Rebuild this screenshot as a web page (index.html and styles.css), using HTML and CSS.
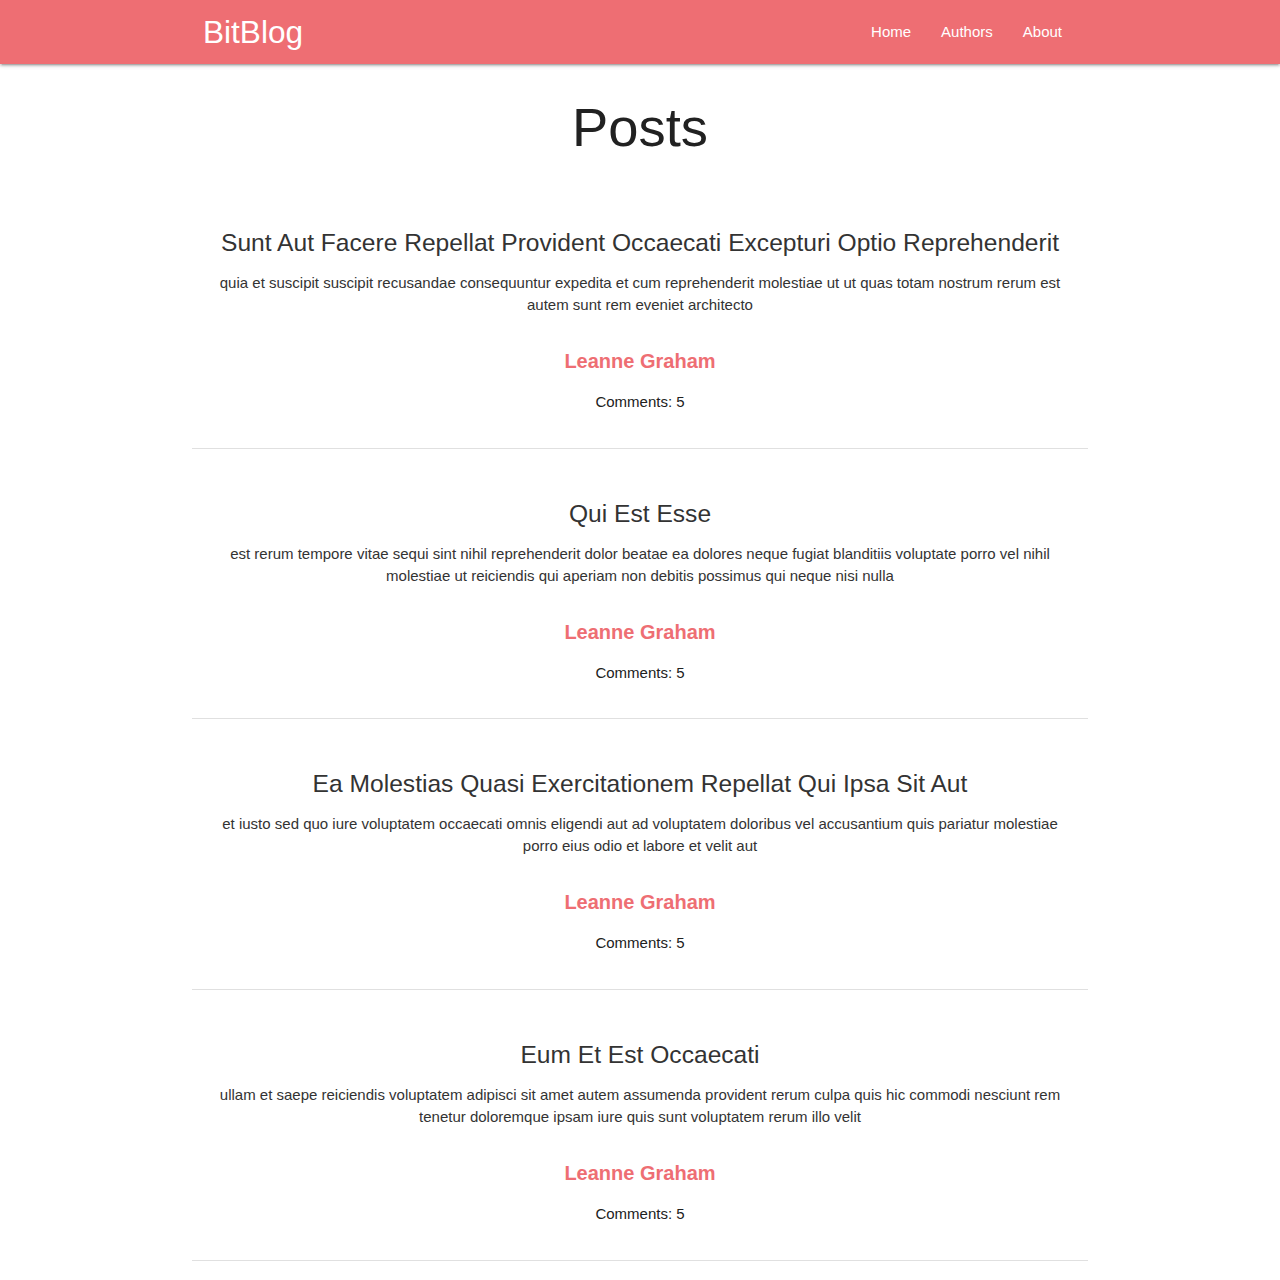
FILE: index.html
```html
<!DOCTYPE html>
<html lang="en">
<head>
<meta charset="utf-8">
<title>BitBlog</title>
<link rel="stylesheet" href="styles.css">
</head>
<body>
<nav class="nav">
  <div class="nav-wrapper">
    <a class="brand" href="#">BitBlog</a>
    <ul class="nav-links">
      <li><a href="#">Home</a></li>
      <li><a href="#">Authors</a></li>
      <li><a href="#">About</a></li>
    </ul>
  </div>
</nav>
<main class="container">
  <h1 class="page-title">Posts</h1>
  <article class="post">
    <h2 class="post-title">Sunt Aut Facere Repellat Provident Occaecati Excepturi Optio Reprehenderit</h2>
    <p class="post-body">quia et suscipit suscipit recusandae consequuntur expedita et cum reprehenderit molestiae ut ut quas totam nostrum rerum est autem sunt rem eveniet architecto</p>
    <a class="post-author" href="#">Leanne Graham</a>
    <p class="post-comments">Comments: 5</p>
  </article>
  <article class="post">
    <h2 class="post-title">Qui Est Esse</h2>
    <p class="post-body">est rerum tempore vitae sequi sint nihil reprehenderit dolor beatae ea dolores neque fugiat blanditiis voluptate porro vel nihil molestiae ut reiciendis qui aperiam non debitis possimus qui neque nisi nulla</p>
    <a class="post-author" href="#">Leanne Graham</a>
    <p class="post-comments">Comments: 5</p>
  </article>
  <article class="post">
    <h2 class="post-title">Ea Molestias Quasi Exercitationem Repellat Qui Ipsa Sit Aut</h2>
    <p class="post-body">et iusto sed quo iure voluptatem occaecati omnis eligendi aut ad voluptatem doloribus vel accusantium quis pariatur molestiae porro eius odio et labore et velit aut</p>
    <a class="post-author" href="#">Leanne Graham</a>
    <p class="post-comments">Comments: 5</p>
  </article>
  <article class="post">
    <h2 class="post-title">Eum Et Est Occaecati</h2>
    <p class="post-body">ullam et saepe reiciendis voluptatem adipisci sit amet autem assumenda provident rerum culpa quis hic commodi nesciunt rem tenetur doloremque ipsam iure quis sunt voluptatem rerum illo velit</p>
    <a class="post-author" href="#">Leanne Graham</a>
    <p class="post-comments">Comments: 5</p>
  </article>
</main>
</body>
</html>
```

FILE: styles.css
```css
* { box-sizing: border-box; }
body {
  margin: 0;
  font-family: "Liberation Sans", Arial, sans-serif;
  color: rgba(0,0,0,0.87);
  background: #fff;
}
a { text-decoration: none; }
.nav {
  height: 64px;
  background: #ee6e73;
  box-shadow: 0 2px 2px 0 rgba(0,0,0,0.14), 0 3px 1px -2px rgba(0,0,0,0.12), 0 1px 5px 0 rgba(0,0,0,0.2);
}
.nav-wrapper {
  width: 896px;
  margin: 0 auto;
  height: 64px;
  padding: 0 11px;
  display: flex;
  align-items: center;
  justify-content: space-between;
}
.brand {
  color: #fff;
  font-size: 31.6px;
  line-height: 64px;
}
.nav-links {
  list-style: none;
  margin: 0;
  padding: 0;
  display: flex;
}
.nav-links a {
  display: block;
  color: #fff;
  font-size: 15px;
  line-height: 64px;
  padding: 0 15px;
}
.container {
  width: 896px;
  margin: 0 auto;
}
.page-title {
  margin: 0;
  padding-top: 32px;
  font-size: 54.3px;
  font-weight: 400;
  line-height: 64px;
  text-align: center;
  color: #212121;
}
.post {
  text-align: center;
  padding: 70px 20px 34.67px;
  border-bottom: 1px solid #e0e0e0;
}
.post + .post { padding-top: 52px; }
.post-title {
  margin: 0;
  font-size: 24.6px;
  font-weight: 400;
  line-height: 26px;
  color: #333;
}
.post-body {
  margin: 16px 0 0;
  font-size: 15px;
  line-height: 22px;
  color: #333;
}
.post-author {
  display: block;
  margin-top: 34px;
  font-size: 20px;
  font-weight: 700;
  line-height: 22px;
  color: #ee6e73;
}
.post-comments {
  margin: 19px 0 0;
  font-size: 15px;
  line-height: 22px;
  color: #212121;
}
```
